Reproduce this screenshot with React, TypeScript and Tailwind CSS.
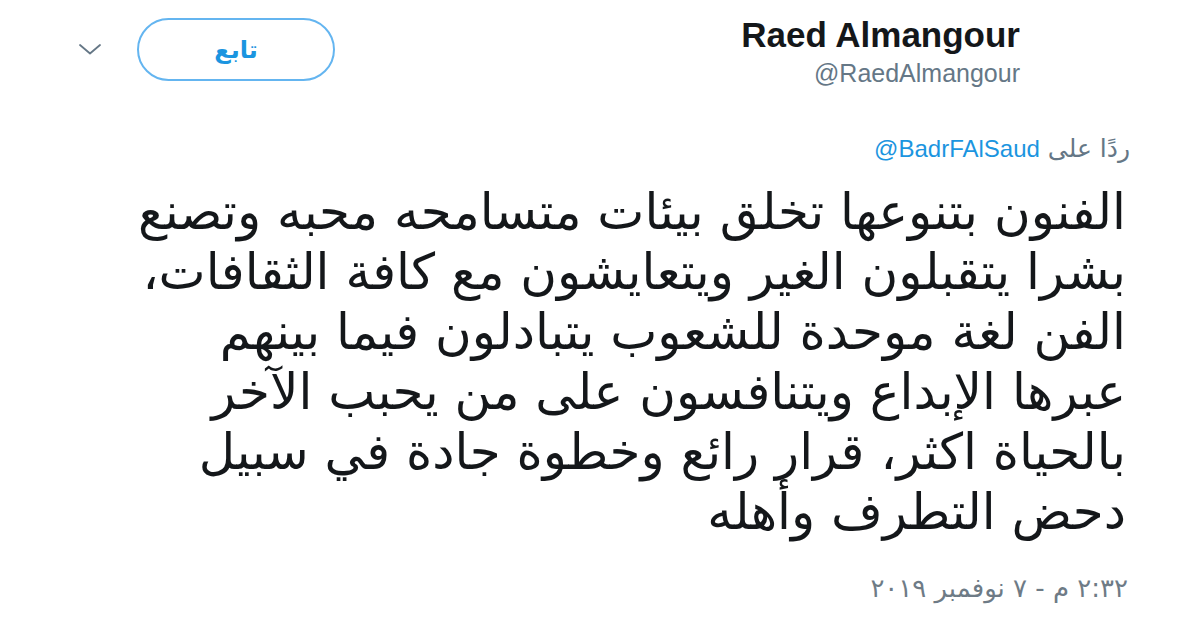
import React from "react";

const lines = [
  "الفنون بتنوعها تخلق بيئات متسامحه محبه وتصنع",
  "بشرا يتقبلون الغير ويتعايشون مع كافة الثقافات،",
  "الفن لغة موحدة للشعوب يتبادلون فيما بينهم",
  "عبرها الإبداع ويتنافسون على من يحبب الآخر",
  "بالحياة اكثر، قرار رائع وخطوة جادة في سبيل",
  "دحض التطرف وأهله",
];

export default function App() {
  return (
    <div className="w-[1200px] h-[629px] bg-white overflow-hidden relative">
      {/* header */}
      <div className="flex justify-between items-start pt-[15px]">
        <div className="flex items-center pl-[78px] pt-[3px]">
          <svg width="24" height="14" viewBox="0 0 24 14" className="-mt-[2px]">
            <path d="M2 3 L12 11.5 L22 3" fill="none" stroke="#657786" strokeWidth="1.8" strokeLinecap="round" strokeLinejoin="round" />
          </svg>
          <div
            dir="rtl"
            className="ml-[35px] w-[198px] h-[63px] rounded-full border-2 border-[#64b5f0] flex items-center justify-center text-[#1b95e0] font-bold text-[24px] font-['DejaVu_Sans',sans-serif]"
          >
            تابع
          </div>
        </div>
        <div className="flex flex-col items-end pr-[180px]">
          <div className="font-['Liberation_Sans',sans-serif] font-bold text-[35px] leading-[40px] text-[#14171a]">
            Raed Almangour
          </div>
          <div className="font-['Liberation_Sans',sans-serif] text-[25px] leading-[30px] text-[#657786] mt-[3px]">
            @RaedAlmangour
          </div>
        </div>
      </div>

      {/* reply line */}
      <div dir="rtl" className="pr-[70px] mt-[46px] text-[25px] leading-[30px] font-['DejaVu_Sans',sans-serif] text-[#657786]">
        ردًا على{" "}
        <bdi dir="ltr" className="text-[#1b95e0] font-['Liberation_Sans',sans-serif] text-[24px]">
          @BadrFAlSaud
        </bdi>
      </div>

      {/* tweet text */}
      <div dir="rtl" className="pr-[74px] mt-[18px] font-['DejaVu_Sans',sans-serif] text-[50px] leading-[60px] text-[#14171a]">
        {lines.map((l, i) => (
          <div key={i} className="whitespace-nowrap">{l}</div>
        ))}
      </div>

      {/* timestamp */}
      <div dir="rtl" className="pr-[72px] mt-[31px] text-[26px] leading-[30px] font-['DejaVu_Sans',sans-serif] text-[#6e7b86]">
        ٢:٣٢ م - ٧ نوفمبر ٢٠١٩
      </div>
    </div>
  );
}
